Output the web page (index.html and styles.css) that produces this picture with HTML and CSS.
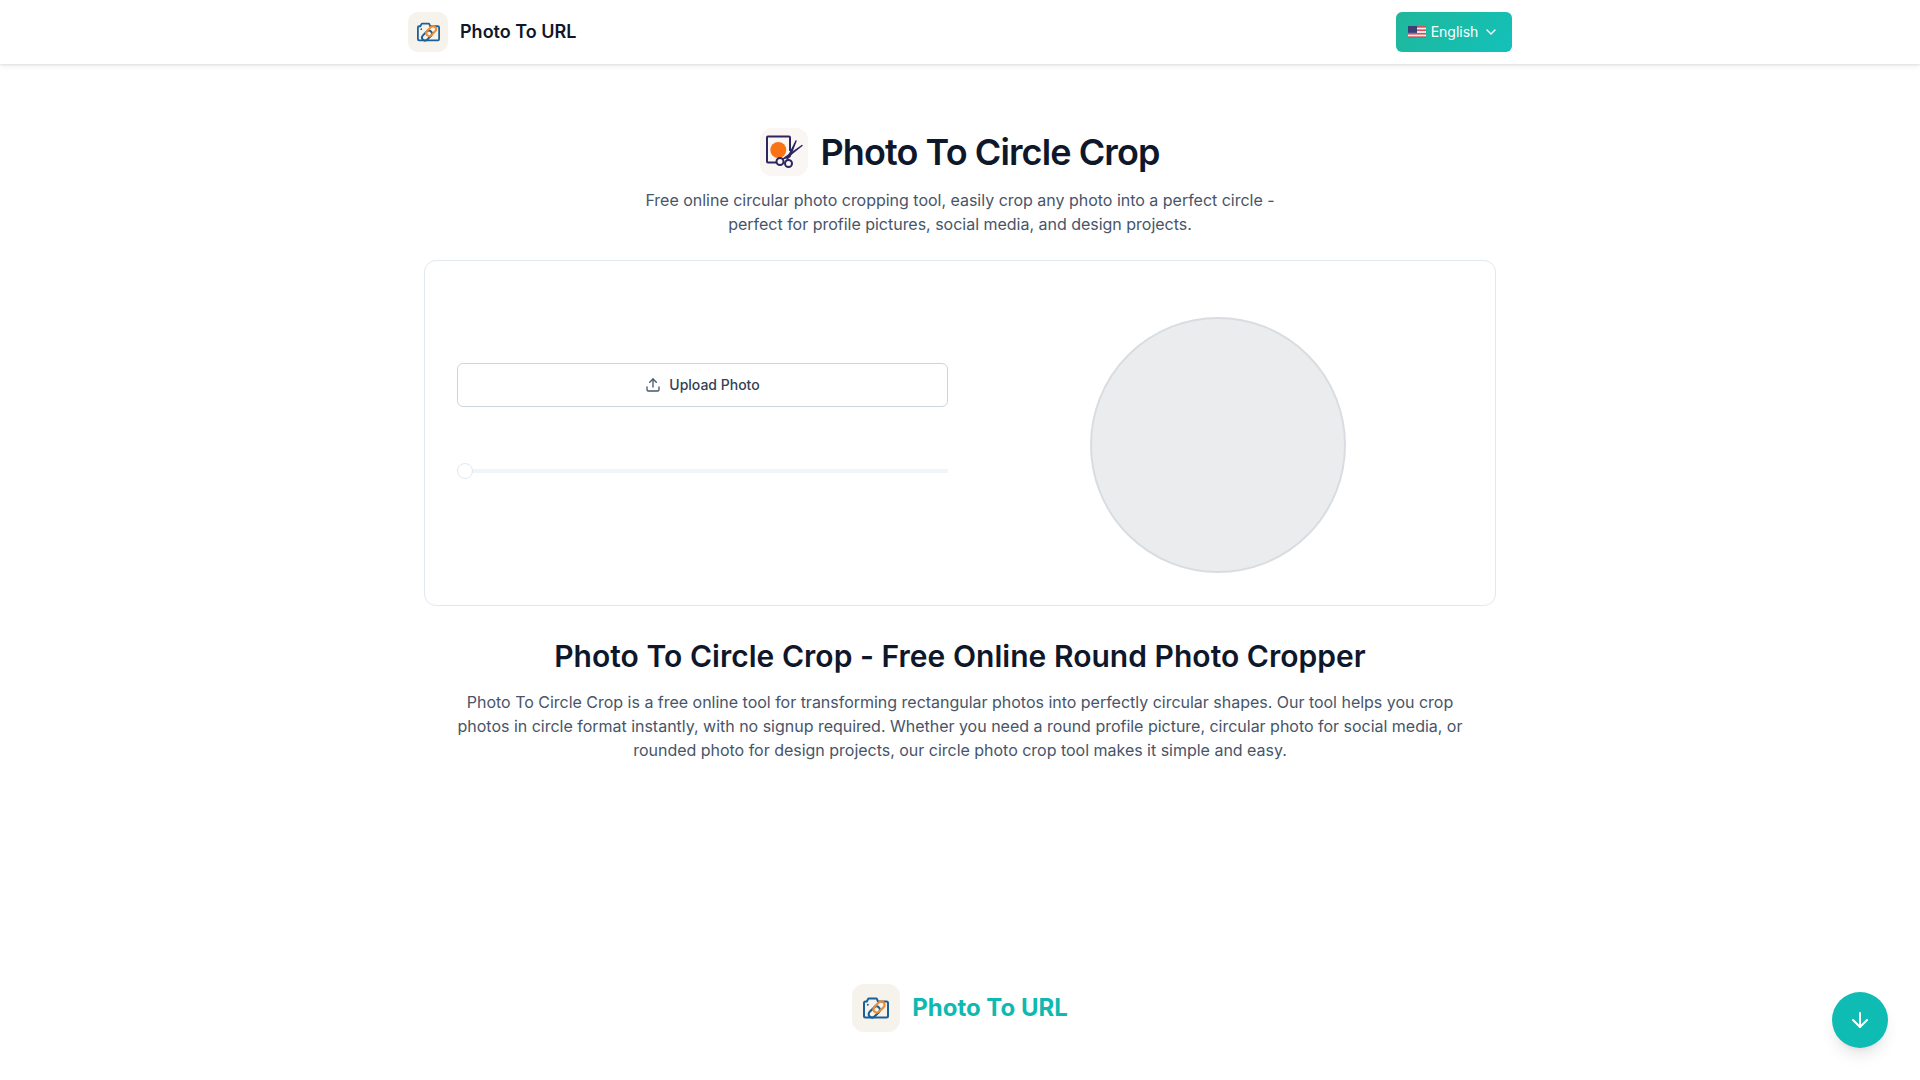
FILE: index.html
```html
<!DOCTYPE html>
<html lang="en">
<head>
<meta charset="utf-8">
<title>Photo To Circle Crop</title>
<link rel="stylesheet" href="styles.css">
</head>
<body>
<svg class="defs" width="0" height="0" aria-hidden="true">
  <symbol id="camlink" viewBox="0 0 26 22">
    <path d="M2.500 4.500h1.300l1.200-2.300a1 1 0 0 1 .9-.6h7.200a1 1 0 0 1 .9.6l.9 2.300h8.600c.8 0 1.500.7 1.500 1.500v13c0 .8-.7 1.500-1.500 1.500H2.500c-.8 0-1.500-.7-1.500-1.500V6c0-.8.7-1.500 1.500-1.500z" fill="none" stroke="#1c5f96" stroke-width="2" stroke-linejoin="round"/>
    <circle cx="4.800" cy="7.800" r="1" fill="#1c5f96"/>
    <rect x="4.800" y="11.600" width="13" height="6.800" rx="3.400" transform="rotate(-45 11.300 15)" fill="none" stroke="#1c5f96" stroke-width="2.200"/>
    <rect x="9.500" y="6.600" width="13" height="6.800" rx="3.400" transform="rotate(-45 16 10)" fill="none" stroke="#f08a2c" stroke-width="2.200"/>
  </symbol>
</svg>

<header class="topbar">
  <div class="topbar-inner">
    <a class="brand">
      <span class="logo-tile logo-small"><svg class="logo-svg-small"><use href="#camlink"/></svg></span>
      <span class="brand-name">Photo To URL</span>
    </a>
    <button class="lang-btn" type="button">
      <svg class="flag" viewBox="0 0 18 12" aria-hidden="true">
        <rect width="18" height="12" fill="#f3f3f3"/>
        <rect y="0" width="18" height="1.700" fill="#d8505c"/>
        <rect y="3.400" width="18" height="1.700" fill="#d8505c"/>
        <rect y="6.900" width="18" height="1.700" fill="#d8505c"/>
        <rect y="10.300" width="18" height="1.700" fill="#d8505c"/>
        <rect width="9" height="6.900" fill="#3b3f78"/>
      </svg>
      <span>English</span>
      <svg class="chev" viewBox="0 0 24 24" fill="none" stroke="currentColor" stroke-width="2" stroke-linecap="round" stroke-linejoin="round" aria-hidden="true"><path d="M6 9l6 6 6-6"/></svg>
    </button>
  </div>
</header>

<main class="page">
  <div class="title-row">
    <span class="logo-tile logo-tool">
      <svg class="tool-svg" viewBox="0 0 48 48" aria-hidden="true">
        <path d="M22 34.500H8a1 1 0 0 1-1-1V9.500a1 1 0 0 1 1-1h21a1 1 0 0 1 1 1V23" fill="none" stroke="#2b2560" stroke-width="2"/>
        <circle cx="18.300" cy="22" r="8" fill="#f97316"/>
        <path d="M42 17.500L23.500 30.500L27 29.500Z" fill="#2b2560" stroke="#2b2560" stroke-width="1.400" stroke-linejoin="round"/>
        <path d="M36 13L27 31L30 28.500Z" fill="#2b2560" stroke="#2b2560" stroke-width="1.400" stroke-linejoin="round"/>
        <circle cx="20" cy="33.500" r="3.500" fill="#f9f6f4" stroke="#2b2560" stroke-width="2"/>
        <circle cx="28.500" cy="35.500" r="3.500" fill="#f9f6f4" stroke="#2b2560" stroke-width="2"/>
      </svg>
    </span>
    <h1 class="title">Photo To Circle Crop</h1>
  </div>
  <p class="lead">Free online circular photo cropping tool, easily crop any photo into a perfect circle -<br>perfect for profile pictures, social media, and design projects.</p>

  <section class="card">
    <div class="controls">
      <button class="upload-btn" type="button">
        <svg class="upload-icon" viewBox="0 0 24 24" fill="none" stroke="currentColor" stroke-width="2" stroke-linecap="round" stroke-linejoin="round" aria-hidden="true"><path d="M3 15v4a2 2 0 0 0 2 2h14a2 2 0 0 0 2-2v-4"/><path d="M17 8l-5-5-5 5"/><path d="M12 3v12"/></svg>
        <span class="upload-label">Upload Photo</span>
      </button>
      <div class="slider">
        <span class="slider-thumb"></span>
      </div>
    </div>
    <div class="preview">
      <div class="preview-circle"></div>
    </div>
  </section>

  <h2 class="subtitle">Photo To Circle Crop - Free Online Round Photo Cropper</h2>
  <p class="body-text">Photo To Circle Crop is a free online tool for transforming rectangular photos into perfectly circular shapes. Our tool helps you crop photos in circle format instantly, with no signup required. Whether you need a round profile picture, circular photo for social media, or rounded photo for design projects, our circle photo crop tool makes it simple and easy.</p>

  <footer class="foot-brand">
    <span class="logo-tile logo-large"><svg class="logo-svg-large"><use href="#camlink"/></svg></span>
    <span class="foot-name">Photo To URL</span>
  </footer>
</main>

<button class="scroll-btn" type="button" aria-label="Scroll down">
  <svg viewBox="0 0 24 24" fill="none" stroke="currentColor" stroke-width="2" stroke-linecap="round" stroke-linejoin="round" aria-hidden="true"><path d="M12 5v14"/><path d="M19 12l-7 7-7-7"/></svg>
</button>
</body>
</html>
```

FILE: styles.css
```css
* { box-sizing: border-box; }
html, body { margin: 0; padding: 0; }
body {
  font-family: Inter, "Liberation Sans", sans-serif;
  background: #fff;
  color: #0f172a;
  height: 1080px;
  overflow: hidden;
}
.defs { position: absolute; }
button { font-family: inherit; }

.topbar {
  height: 64px;
  background: #fff;
  box-shadow: 0 1px 2px rgba(15, 23, 42, 0.1), 0 3px 6px rgba(15, 23, 42, 0.05);
}
.topbar-inner {
  max-width: 1104px;
  height: 64px;
  margin: 0 auto;
  display: flex;
  align-items: center;
  justify-content: space-between;
}
.brand { display: flex; align-items: center; gap: 12px; }
.brand-name { font-size: 18px; font-weight: 600; line-height: 28px; color: #0f172a; }

.logo-tile {
  display: flex;
  align-items: center;
  justify-content: center;
  background: #f6f3ec;
  flex: none;
}
.logo-small { width: 40px; height: 40px; border-radius: 10px; }
.logo-svg-small { width: 23px; height: 20px; }
.logo-large { width: 48px; height: 48px; border-radius: 12px; }
.logo-svg-large { width: 26px; height: 22px; }
.logo-tool { width: 48px; height: 48px; border-radius: 12px; background: #f9f6f4; }
.tool-svg { width: 48px; height: 48px; }

.lang-btn {
  width: 116px;
  height: 40px;
  border: 0;
  border-radius: 6px;
  background: linear-gradient(135deg, #1fb79a, #13c1ba);
  color: #fff;
  font-size: 14px;
  line-height: 20px;
  display: flex;
  align-items: center;
  justify-content: center;
  gap: 5px;
  padding: 0 1px 0 0;
}
.flag { width: 18px; height: 12px; }
.chev { width: 16px; height: 16px; }

.page {
  max-width: 1072px;
  margin: 0 auto;
  padding-top: 64px;
}
.title-row { display: flex; align-items: center; justify-content: center; gap: 12px; height: 48px; }
.title { margin: 0; font-size: 36px; line-height: 40px; font-weight: 600; letter-spacing: -0.9px; color: #0f172a; }
.lead {
  margin: 12px 0 0;
  text-align: center;
  font-size: 16px;
  line-height: 24px;
  letter-spacing: -0.015px;
  color: #475569;
}

.card {
  margin-top: 24px;
  height: 346px;
  border: 1px solid #e2e8f0;
  border-radius: 12px;
  padding: 32px;
  display: grid;
  grid-template-columns: 1fr 1fr;
  gap: 24px;
  background: #fff;
}
.controls { padding-top: 70px; display: flex; flex-direction: column; }
.upload-btn {
  height: 44px;
  width: 100%;
  background: #fff;
  border: 1px solid #cbd5e1;
  border-radius: 6px;
  color: #334155;
  font-size: 14px;
  font-weight: 500;
  display: flex;
  align-items: center;
  justify-content: center;
  gap: 8px;
  padding: 0 0 1px;
}
.upload-icon { width: 16px; height: 16px; color: #475569; }
.slider {
  margin-top: 56px;
  height: 16px;
  display: flex;
  align-items: center;
  background: linear-gradient(#f1f5f9, #f1f5f9) center / 100% 4px no-repeat;
  border-radius: 8px;
}
.slider-thumb {
  width: 16px;
  height: 16px;
  border-radius: 50%;
  background: #fff;
  border: 1px solid #e2e8f0;
}
.preview { display: flex; justify-content: center; padding-top: 24px; }
.preview-circle {
  width: 256px;
  height: 256px;
  border-radius: 50%;
  background: #ebecee;
  border: 2px solid #d9dce1;
}

.subtitle {
  margin: 30px 0 0;
  text-align: center;
  font-size: 30px;
  line-height: 40px;
  font-weight: 600;
  letter-spacing: 0.03px;
  color: #0f172a;
}
.body-text {
  margin: 14px auto 0;
  width: 1024px;
  text-align: center;
  font-size: 16px;
  line-height: 24px;
  letter-spacing: -0.015px;
  color: #475569;
}

.foot-brand {
  margin-top: 222px;
  display: flex;
  align-items: center;
  justify-content: center;
  gap: 12px;
}
.foot-name { font-size: 24px; line-height: 32px; font-weight: 700; color: #0fb9b1; }

.scroll-btn {
  position: fixed;
  right: 32px;
  bottom: 32px;
  width: 56px;
  height: 56px;
  border: 0;
  border-radius: 50%;
  background: #0fbcb3;
  color: #fff;
  padding: 0;
  display: flex;
  align-items: center;
  justify-content: center;
  box-shadow: 0 10px 15px -3px rgba(0, 0, 0, 0.1), 0 4px 6px -4px rgba(0, 0, 0, 0.1);
}
.scroll-btn svg { width: 24px; height: 24px; }
```
